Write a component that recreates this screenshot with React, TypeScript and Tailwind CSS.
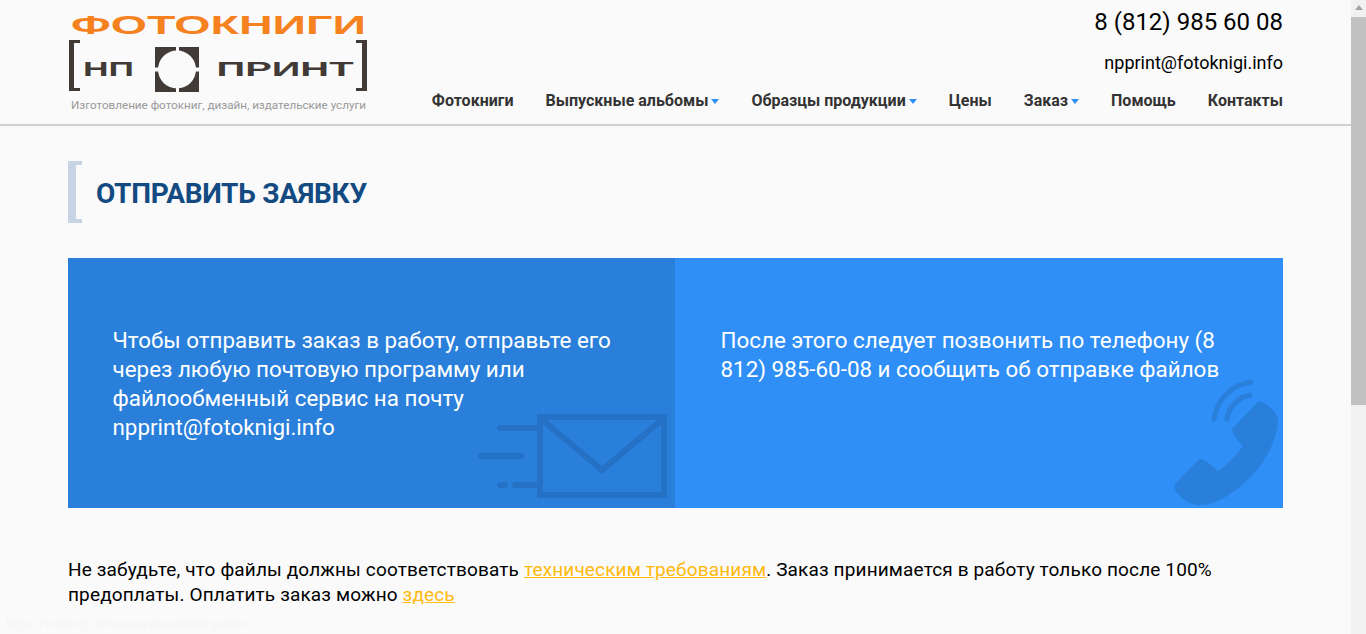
const font = { fontFamily: "Roboto, sans-serif" };

function Logo() {
  return (
    <svg width="302" height="96" viewBox="0 0 302 96" className="block">
      <text x="3" y="29" fontFamily="Liberation Sans" fontWeight="700" fontSize="25" fill="#f6821f" textLength="295" lengthAdjust="spacingAndGlyphs">ФОТОКНИГИ</text>
      <path d="M1 35H12V38H6V83H12V86H1Z" fill="#413a36" />
      <path d="M299 35H288V38H294V83H288V86H299Z" fill="#413a36" />
      <text x="15" y="71" fontFamily="Liberation Sans" fontWeight="700" fontSize="20" fill="#413a36" textLength="51" lengthAdjust="spacingAndGlyphs">НП</text>
      <text x="148.5" y="71" fontFamily="Liberation Sans" fontWeight="700" fontSize="20" fill="#413a36" textLength="137" lengthAdjust="spacingAndGlyphs">ПРИНТ</text>
      <rect x="87" y="42" width="44" height="45" fill="#413a36" />
      <circle cx="109" cy="64.5" r="19" fill="#fafafa" />
      <rect x="108" y="42" width="3" height="6" fill="#fafafa" />
      <rect x="108" y="81" width="3" height="6" fill="#fafafa" />
      <rect x="87" y="62.5" width="6" height="4" fill="#fafafa" />
      <rect x="125" y="62.5" width="6" height="4" fill="#fafafa" />
    </svg>
  );
}

function NavItem({ label, caret }: { label: string; caret?: boolean }) {
  return (
    <a className="flex items-center text-[16px] font-bold text-[#333] leading-[20px]">
      {label}
      {caret && <span className="ml-[3px] mt-[1px] w-0 h-0 border-x-[4px] border-x-transparent border-t-[5px] border-t-[#2f8ff7]" />}
    </a>
  );
}

function MailIcon() {
  return (
    <svg width="192" height="88" viewBox="0 0 192 88" className="absolute right-[5px] bottom-[6px]" fill="none" stroke="#2471c6" strokeWidth="6">
      <rect x="62" y="3" width="124" height="78" />
      <path d="M62 4L124 56L186 4" />
      <g strokeLinecap="round">
        <path d="M22 14H59" />
        <path d="M3 42H43" />
        <path d="M22 71H27" />
        <path d="M37 71H59" />
      </g>
    </svg>
  );
}

function PhoneIcon() {
  return (
    <svg width="110" height="130" viewBox="0 0 110 130" className="absolute right-[1px] bottom-0" fill="#2a7fdb">
      <path d="M87 23C97 26 107 36 106 44C104 68 88 92 70 107C55 120 38 128 26 127C15 126 3 116 2 108C10 98 20 88 28 81C34 82 41 88 46 93C56 86 65 77 71 68C66 63 61 57 60 51C69 41 78 32 87 23Z" />
      <path d="M79 4C62 6 45 20 42 41" fill="none" stroke="#2a7fdb" strokeWidth="5" strokeLinecap="round" />
      <path d="M78 17C67 19 57 28 55 41" fill="none" stroke="#2a7fdb" strokeWidth="5" strokeLinecap="round" />
    </svg>
  );
}

export default function App() {
  return (
    <div className="flex h-[634px] overflow-hidden bg-[#fafafa] text-black" style={font}>
      <div className="relative flex-1 min-w-0">
        <header className="h-[126px] border-b-2 border-[#cfcfcf] px-[68px] flex justify-between">
          <div className="pt-[5px]">
            <Logo />
            <p className="ml-[3px] -mt-[3px] text-[11.66px] leading-[14px] text-[#999]">Изготовление фотокниг, дизайн, издательские услуги</p>
          </div>
          <div className="flex flex-col items-end">
            <a className="mt-[8px] text-[24px] leading-[28px]">8 (812) 985 60 08</a>
            <a className="mt-[16px] text-[18px] leading-[22px]">npprint@fotoknigi.info</a>
            <nav className="mt-[17px] flex gap-[32px]">
              <NavItem label="Фотокниги" />
              <NavItem label="Выпускные альбомы" caret />
              <NavItem label="Образцы продукции" caret />
              <NavItem label="Цены" />
              <NavItem label="Заказ" caret />
              <NavItem label="Помощь" />
              <NavItem label="Контакты" />
            </nav>
          </div>
        </header>

        <main className="px-[68px]">
          <div className="mt-[35px] flex items-center h-[62px] relative">
            <span className="absolute left-0 top-0 bottom-0 w-[14px] border-l-[8px] border-y-4 border-[#c8d3e6]" />
            <h1 className="ml-[28px] mt-[3px] text-[28px] tracking-[-0.3px] font-bold uppercase text-[#134a82] leading-[34px]">Отправить заявку</h1>
          </div>

          <section className="mt-[35px] flex h-[250px] text-white text-[22.4px] leading-[29px]">
            <div className="relative w-[607px] bg-[#2a7fdb] pl-[44.5px] pr-[40px] pt-[68px]">
              <p>Чтобы отправить заказ в работу, отправьте его через любую почтовую программу или файлообменный сервис на почту npprint@fotoknigi.info</p>
              <MailIcon />
            </div>
            <div className="relative flex-1 bg-[#2f8ff7] pl-[45.5px] pr-[40px] pt-[68px]">
              <p>После этого следует позвонить по телефону (8 812) 985-60-08 и сообщить об отправке файлов</p>
              <PhoneIcon />
            </div>
          </section>

          <p className="mt-[49px] text-[19px] tracking-[0.14px] leading-[25px] text-black">
            Не забудьте, что файлы должны соответствовать <a className="text-[#ffb90f] underline">техническим требованиям</a>. Заказ принимается в работу только после 100% предоплаты. Оплатить заказ можно <a className="text-[#ffb90f] underline">здесь</a>
          </p>
        </main>

        <span className="absolute left-[6px] bottom-[1px] text-[12px] text-[#f6f6f6]">https://fotoknigi.info/examples/kindergarden</span>
      </div>

      <div className="w-[15px] bg-[#f1f1f1] flex flex-col items-center shrink-0">
        <span className="mt-[5px] w-0 h-0 border-x-[4px] border-x-transparent border-b-[5px] border-b-[#a3a3a3]" />
        <span className="mt-[7px] w-full h-[388px] bg-[#c1c1c1]" />
      </div>
    </div>
  );
}
